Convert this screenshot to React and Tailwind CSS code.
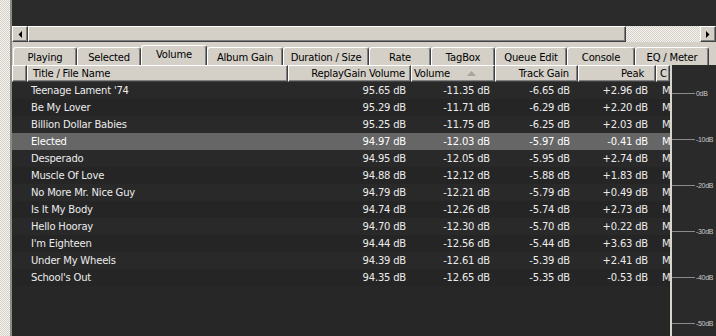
const tabs = [
  { label: 'Playing', w: 'w-[64px]' },
  { label: 'Selected', w: 'w-[64px]' },
  { label: 'Volume', w: 'w-[66px]', active: true },
  { label: 'Album Gain', w: 'w-[76px]' },
  { label: 'Duration / Size', w: 'w-[86px]' },
  { label: 'Rate', w: 'w-[62px]' },
  { label: 'TagBox', w: 'w-[64px]' },
  { label: 'Queue Edit', w: 'w-[72px]' },
  { label: 'Console', w: 'w-[68px]' },
  { label: 'EQ / Meter', w: 'w-[74px]' },
];

const rows = [
  ["Teenage Lament '74", '95.65 dB', '-11.35 dB', '-6.65 dB', '+2.96 dB'],
  ['Be My Lover', '95.29 dB', '-11.71 dB', '-6.29 dB', '+2.20 dB'],
  ['Billion Dollar Babies', '95.25 dB', '-11.75 dB', '-6.25 dB', '+2.03 dB'],
  ['Elected', '94.97 dB', '-12.03 dB', '-5.97 dB', '-0.41 dB'],
  ['Desperado', '94.95 dB', '-12.05 dB', '-5.95 dB', '+2.74 dB'],
  ['Muscle Of Love', '94.88 dB', '-12.12 dB', '-5.88 dB', '+1.83 dB'],
  ['No More Mr. Nice Guy', '94.79 dB', '-12.21 dB', '-5.79 dB', '+0.49 dB'],
  ['Is It My Body', '94.74 dB', '-12.26 dB', '-5.74 dB', '+2.73 dB'],
  ['Hello Hooray', '94.70 dB', '-12.30 dB', '-5.70 dB', '+0.22 dB'],
  ["I'm Eighteen", '94.44 dB', '-12.56 dB', '-5.44 dB', '+3.63 dB'],
  ['Under My Wheels', '94.39 dB', '-12.61 dB', '-5.39 dB', '+2.41 dB'],
  ["School's Out", '94.35 dB', '-12.65 dB', '-5.35 dB', '-0.53 dB'],
];

const ticks = ['0dB', '-10dB', '-20dB', '-30dB', '-40dB', '-50dB'];

const raised =
  'bg-[#d4d0c8] border border-t-white border-l-white border-r-[#404040] border-b-[#404040] shadow-[inset_-1px_-1px_#808080]';
const checker =
  'bg-[repeating-conic-gradient(#f4f3f0_0_25%,#d4d0c8_0_50%)] bg-size-[2px_2px]';

function ArrowBtn({ dir }) {
  return (
    <div className={`w-[16px] h-full flex items-center justify-center ${raised}`}>
      <svg width="4" height="7" viewBox="0 0 4 7">
        {dir === 'left' ? <path d="M4 0V7L0.5 3.5Z" fill="#000" /> : <path d="M0 0V7L3.5 3.5Z" fill="#000" />}
      </svg>
    </div>
  );
}

export default function App() {
  return (
    <div className="w-[716px] h-[336px] flex overflow-hidden bg-[#d4d0c8] font-['DejaVu_Sans',Verdana,sans-serif] text-[10px] tracking-[-0.2px]">
      {/* left dithered strip */}
      <div className={`w-[10px] h-full ${checker}`}></div>
      <div className="w-[2px] h-full bg-[#8c8a86]"></div>

      <div className="flex-1 flex flex-col min-w-0">
        {/* dark top area */}
        <div className="h-[26px] bg-[#2b2b2b]"></div>

        {/* horizontal scrollbar */}
        <div className="h-[16px] flex">
          <ArrowBtn dir="left" />
          <div className={`w-[598px] h-full ${raised}`}></div>
          <div className={`flex-1 h-full ${checker}`}></div>
          <ArrowBtn dir="right" />
        </div>

        {/* tabs */}
        <div className="h-[23px] pt-[3px] pl-[1px] flex items-end">
          {tabs.map((t) => (
            <div
              key={t.label}
              className={`${t.w} ${t.active ? 'h-[20px] pb-[3px]' : 'h-[18px] pt-[1px]'} flex items-center justify-center bg-[#d4d0c8] border-t border-l border-r border-t-white border-l-white border-r-[#404040] rounded-t-[3px] shadow-[inset_-1px_0_#808080] text-black whitespace-nowrap`}
            >
              {t.label}
            </div>
          ))}
        </div>

        {/* list + meter */}
        <div className="flex-1 flex min-h-0">
          <div className="w-[658px] flex flex-col bg-[#272727]">
            {/* header */}
            <div className="h-[17px] flex text-black whitespace-nowrap">
              <div className={`w-[15px] ${raised}`}></div>
              <div className={`w-[261px] pl-[5px] flex items-center ${raised}`}>Title / File Name</div>
              <div className={`w-[123px] pr-[5px] flex items-center justify-end ${raised}`}>ReplayGain Volume</div>
              <div className={`w-[84px] pl-[2px] flex items-center ${raised}`}>
                <span>Volume</span>
                <svg width="9" height="5" viewBox="0 0 9 5" className="ml-[17px]">
                  <path d="M0 5L4.5 0L9 5Z" fill="#a8a59e" />
                </svg>
              </div>
              <div className={`w-[83px] pr-[8px] flex items-center justify-end ${raised}`}>Track Gain</div>
              <div className={`w-[78px] pr-[11px] flex items-center justify-end ${raised}`}>Peak</div>
              <div className={`w-[14px] pl-[3px] flex items-center overflow-hidden ${raised}`}>C</div>
            </div>

            {/* rows */}
            <div className="flex flex-col text-[#ececec]">
              {rows.map((r, i) => (
                <div
                  key={r[0]}
                  className={`h-[17px] flex items-center whitespace-nowrap ${
                    r[0] === 'Elected' ? 'bg-[#666666] text-white' : i % 2 === 0 ? 'bg-[#292929]' : 'bg-[#252525]'
                  }`}
                >
                  <div className="w-[15px]"></div>
                  <div className="w-[261px] pl-[4px]">{r[0]}</div>
                  <div className="w-[123px] pr-[5px] text-right">{r[1]}</div>
                  <div className="w-[84px] pr-[5px] text-right">{r[2]}</div>
                  <div className="w-[83px] pr-[8px] text-right">{r[3]}</div>
                  <div className="w-[78px] pr-[8px] text-right">{r[4]}</div>
                  <div className="w-[14px] pl-[6px] overflow-hidden">M</div>
                </div>
              ))}
            </div>
          </div>

          {/* meter scale */}
          <div className="flex-1 bg-[#2a2a2a] border-l-2 border-[#d8d5cf] flex flex-col pt-[28px] gap-[45px] overflow-hidden font-['Liberation_Sans',Arial,sans-serif]">
            {ticks.map((t) => (
              <div key={t} className="h-px flex items-center whitespace-nowrap">
                <div className="w-[23px] h-px bg-[#8a8a8a] shrink-0"></div>
                <span className="ml-[1px] text-[7px] tracking-[-0.3px] text-[#c8c8c8] leading-none">{t}</span>
              </div>
            ))}
          </div>
        </div>
      </div>
    </div>
  );
}
